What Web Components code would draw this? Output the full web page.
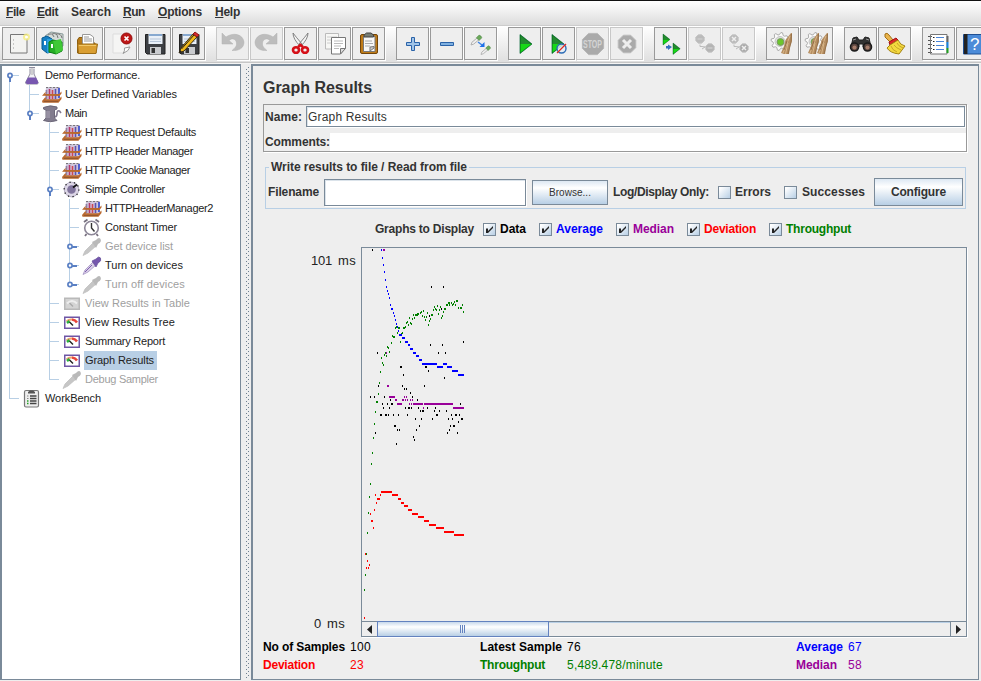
<!DOCTYPE html>
<html lang="en"><head><meta charset="utf-8"><title>JMeter - Graph Results</title>
<style>
html,body{margin:0;width:981px;height:681px;overflow:hidden;background:#eee}
body{font:12px "Liberation Sans",Arial,sans-serif;color:#333}
</style></head><body>
<jmeter-app></jmeter-app>

<template id="app">
<style>
:host{display:grid;grid-template-rows:26px 38px 617px;width:981px;height:681px;overflow:hidden;background:#eee}
.main{display:grid;grid-template-columns:243px 8px 730px;min-height:0}
</style>
<menu-bar></menu-bar><tool-bar></tool-bar>
<div class="main"><test-tree></test-tree><split-bar></split-bar><results-panel></results-panel></div>
</template>

<template id="split">
<style>:host{display:block;background:#eee;overflow:hidden}svg{display:block}</style>
<svg width="8" height="617"><defs><pattern id="p" width="4" height="4" patternUnits="userSpaceOnUse"><rect x="3" y="1" width="1" height="1" fill="#6f8090"/><rect x="1" y="3" width="1" height="1" fill="#6f8090"/></pattern></defs><rect x="2" y="2" width="5" height="613" fill="url(#p)"/></svg>
</template>

<template id="menu">
<style>
:host{display:flex;box-sizing:border-box;height:26px;border-top:1px solid #111;border-bottom:1px solid #ccc;background:linear-gradient(#fff,#dcdcdc);padding-left:6px;font-weight:bold;line-height:22px}
fit-text{margin-right:12px}fit-text.b{margin-right:13px}
</style>
<fit-text w="19"><u>F</u>ile</fit-text><fit-text w="21" class="b"><u>E</u>dit</fit-text><fit-text w="40">Search</fit-text><fit-text w="22" class="b"><u>R</u>un</fit-text><fit-text w="44" class="b"><u>O</u>ptions</fit-text><fit-text w="25"><u>H</u>elp</fit-text>
</template>

<template id="toolbar">
<style>
:host{display:flex;box-sizing:border-box;height:38px;gap:11px;padding:1px 0 0 2px;background:linear-gradient(#fff,#dedede);border-bottom:1px solid #f4f4f4;box-shadow:inset 0 -1px #c6c6c6;overflow:hidden}
div{display:flex;gap:1px;flex:none}
</style>
<div><tool-button icon="new"></tool-button><tool-button icon="books"></tool-button><tool-button icon="open"></tool-button><tool-button icon="close"></tool-button><tool-button icon="save"></tool-button><tool-button icon="saveas"></tool-button></div>
<div><tool-button icon="undo" off></tool-button><tool-button icon="redo" off></tool-button><tool-button icon="cut"></tool-button><tool-button icon="copy"></tool-button><tool-button icon="paste"></tool-button></div>
<div><tool-button icon="plus"></tool-button><tool-button icon="minus"></tool-button><tool-button icon="toggle"></tool-button></div>
<div><tool-button icon="start"></tool-button><tool-button icon="nopause"></tool-button><tool-button icon="stop" off></tool-button><tool-button icon="shutdown" off></tool-button></div>
<div><tool-button icon="rstart"></tool-button><tool-button icon="rstop" off></tool-button><tool-button icon="rshut" off></tool-button></div>
<div><tool-button icon="clear"></tool-button><tool-button icon="clearall"></tool-button></div>
<div><tool-button icon="search"></tool-button><tool-button icon="reset"></tool-button></div>
<div><tool-button icon="list"></tool-button><tool-button icon="help"></tool-button></div>
</template>

<template id="tree">
<style>
:host{display:block;box-sizing:border-box;background:#fff;border:1px solid #7a8a99;border-left-width:2px;border-top-width:2px;font-size:11px;height:616px;margin-right:2px}
</style>
<tree-node level="0" lines="9b" handle="open" icon="flask" w="95">Demo Performance.</tree-node>
<tree-node level="1" lines="9 29" icon="tubes" w="112">User Defined Variables</tree-node>
<tree-node level="1" lines="9 29t" handle="open" icon="spool" w="22">Main</tree-node>
<tree-node level="2" lines="9 49" icon="tubes" w="111">HTTP Request Defaults</tree-node>
<tree-node level="2" lines="9 49" icon="tubes" w="108">HTTP Header Manager</tree-node>
<tree-node level="2" lines="9 49" icon="tubes" w="105">HTTP Cookie Manager</tree-node>
<tree-node level="2" lines="9 49" handle="open" icon="dial" w="80">Simple Controller</tree-node>
<tree-node level="3" lines="9 49 69" icon="tubes" w="108">HTTPHeaderManager2</tree-node>
<tree-node level="3" lines="9 49 69" icon="clock" w="72">Constant Timer</tree-node>
<tree-node level="3" lines="9 49 69" handle="shut" icon="dropoff" off w="68">Get device list</tree-node>
<tree-node level="3" lines="9 49 69" handle="shut" icon="drop" w="78">Turn on devices</tree-node>
<tree-node level="3" lines="9 49 69t" handle="shut" icon="dropoff" off w="80">Turn off devices</tree-node>
<tree-node level="2" lines="9 49" icon="gaugeoff" off w="105">View Results in Table</tree-node>
<tree-node level="2" lines="9 49" icon="gauge" w="90">View Results Tree</tree-node>
<tree-node level="2" lines="9 49" icon="gauge" w="80">Summary Report</tree-node>
<tree-node level="2" lines="9 49" icon="gauge" selected w="69">Graph Results</tree-node>
<tree-node level="2" lines="9 49t" icon="dropoff" off w="73">Debug Sampler</tree-node>
<tree-node level="0" lines="9t" icon="bench" w="56">WorkBench</tree-node>
</template>

<template id="panel">
<style>
:host{display:block;box-sizing:border-box;width:728px;height:616px;border:1px solid #7a8a99;border-top-width:2px;border-left-width:2px;padding-left:10px;font-weight:bold;overflow:hidden}
h1{margin:13px 0 7px;font-size:16px;line-height:18px;height:18px}
.names{box-sizing:border-box;width:704px;height:48px;border:1px solid #999;box-shadow:1px 1px #fff;padding-left:1px;display:grid;grid-template-rows:24px 4px 18px;line-height:24px}
.r{display:flex}.r fit-text{flex:none}
.in{box-sizing:border-box;background:#fff;border:1px solid #7a8a99;box-shadow:inset 1px 1px #dbe3ea,1px 1px #fff;font-weight:normal}
.name{margin:1px 0 0 4px;width:659px;height:21px;padding-left:1px;line-height:20px}
.names .c{line-height:19px}.com{flex:1;background:#fff;height:18px}
.c{grid-row:3}
.file{box-sizing:border-box;margin:15px 0 0 2px;width:701px;height:42px;border:1px solid #b8cfe5;padding-left:2px;display:grid;grid-template-rows:10px 29px}
.legend{height:16px;margin:-9px 0 0 1px;line-height:16px}
.legend fit-text{background:#eee;padding:0 2px}
.frow{display:flex;align-items:center;height:28px}
.filebox{width:202px;height:27px;margin:0 6px 0 5px}
.graphs{display:flex;align-items:center;height:18px;margin:11px 0 9px 112px}
.plot{display:grid;grid-template-columns:98px 606px;height:390px;font-weight:normal;font-size:13px;color:#222}
.axis{display:flex;flex-direction:column;justify-content:space-between;padding:6px 0 6px;line-height:15px}
.axis div{display:flex;gap:6px}.axis div:first-child{padding-left:48px}.axis div:last-child{padding-left:51px}
.sum{display:grid;grid-template-columns:87px 130px 87px 229px 52px 60px;grid-auto-rows:18px;line-height:18px;padding-top:1px}
.n{font-weight:normal}
.k{color:#000}.bl{color:#00f}.rd{color:#f00}.gr{color:#008000}.pu{color:#909}
</style>
<h1><fit-text w="109">Graph Results</fit-text></h1>
<div class="names"><div class="r"><fit-text w="37">Name:</fit-text><div class="in name"><fit-text w="79">Graph Results</fit-text></div></div>
<div class="r c"><fit-text w="65">Comments:</fit-text><div class="com"></div></div></div>
<div class="file"><div class="legend"><fit-text w="196">Write results to file / Read from file</fit-text></div>
<div class="frow"><fit-text w="51">Filename</fit-text><div class="in filebox"></div><swing-button style="width:76px;height:25px;font-weight:normal;font-size:10px"><fit-text w="42">Browse...</fit-text></swing-button>
<fit-text w="96" style="margin:0 9px 0 5px">Log/Display Only:</fit-text><swing-check></swing-check><fit-text w="36" style="margin:0 13px 0 4px">Errors</fit-text><swing-check></swing-check><fit-text w="63" style="margin:0 9px 0 5px">Successes</fit-text><swing-button style="width:89px;height:28px"><fit-text w="55">Configure</fit-text></swing-button></div></div>
<div class="graphs"><fit-text w="99" style="margin-right:9px">Graphs to Display</fit-text>
<swing-check on></swing-check><fit-text class="k" w="26" style="margin:0 13px 0 4px">Data</fit-text>
<swing-check on></swing-check><fit-text class="bl" w="47" style="margin:0 13px 0 4px">Average</fit-text>
<swing-check on></swing-check><fit-text class="pu" w="41" style="margin:0 13px 0 4px">Median</fit-text>
<swing-check on></swing-check><fit-text class="rd" w="52" style="margin:0 13px 0 4px">Deviation</fit-text>
<swing-check on></swing-check><fit-text class="gr" w="65" style="margin-left:4px">Throughput</fit-text></div>
<div class="plot"><div class="axis"><div><fit-text w="21">101</fit-text><fit-text w="18">ms</fit-text></div><div><fit-text w="7">0</fit-text><fit-text w="18">ms</fit-text></div></div><results-graph></results-graph></div>
<div class="sum"><fit-text class="k" w="82">No of Samples</fit-text><fit-text class="n k" w="21">100</fit-text><fit-text class="k" w="82">Latest Sample</fit-text><fit-text class="n k" w="14">76</fit-text><fit-text class="bl" w="47">Average</fit-text><fit-text class="n bl" w="14">67</fit-text>
<fit-text class="rd" w="52">Deviation</fit-text><fit-text class="n rd" w="14">23</fit-text><fit-text class="gr" w="65">Throughput</fit-text><fit-text class="n gr" w="96">5,489.478/minute</fit-text><fit-text class="pu" w="41">Median</fit-text><fit-text class="n pu" w="14">58</fit-text></div>
</template>

<template id="graph">
<style>
:host{display:grid;grid-template-rows:373px 15px;box-sizing:border-box;width:606px;height:390px;border:1px solid #7a8a99;box-shadow:1px 1px #fff}
svg{display:block}
.bar{display:flex;box-sizing:border-box;height:15px;border-top:1px solid #7a8a99;background:#eee}
.b{width:15px;display:grid;place-items:center;flex:none}
.th{box-sizing:border-box;width:172px;height:16px;margin-top:-1px;border:1px solid #6382bf;background:linear-gradient(#c8d9ec,#fff 35%,#b8cfe5);display:grid;place-items:center}
.tr{flex:1;border-right:1px solid #7a8a99;box-shadow:inset 0 1px #b8cfe5}
</style>
<svg class="data" width="604" height="373" viewBox="362 248 604 373" shape-rendering="crispEdges"></svg>
<div class="bar"><div class="b"><svg width="5" height="9"><path d="M5 0V9L0 4.500z" fill="#222"/></svg></div><div class="th"><svg width="6" height="9" shape-rendering="crispEdges"><path d="M.5 0V8M2.500 0V8M4.500 0V8" stroke="#6382bf"/></svg></div><div class="tr"></div><div class="b"><svg width="5" height="9"><path d="M0 0V9L5 4.500z" fill="#222"/></svg></div></div>
</template>

<script>
const tpl=(host,id)=>host.attachShadow({mode:'open'}).append(document.getElementById(id).content.cloneNode(true));
const simple=(tag,id)=>customElements.define(tag,class extends HTMLElement{constructor(){super();tpl(this,id)}});

const page='<path d="M7.500 6.500H24V25H7.500z" fill="#f3f3f1" stroke="#777"/>';
const disk='<path d="M6.500 6.500H26V26H8L6.500 24.500z" fill="#3c3f43" stroke="#222"/><path d="M9.500 6H23.500V16H9.500z" fill="#e9f0f8"/><path d="M10 6H23V8H10z" fill="#87a9d0"/><path d="M11 11H22M11 13.500H22" stroke="#b6c5d8"/><path d="M11 19H22V26H11z" fill="#c9cbce"/><path d="M12.500 20H16V25H12.500z" fill="#333"/>';
const curl='<path fill="#bdbdbd" stroke="#b2b2b2" stroke-width=".5" d="M5 5V16H16L12 12.500C15 9.500 19 11 19.500 15C20 18 18 20 15 22.500C22 23 27 20 27 14C26 6 16 4 9 9z"/>';
const tri=(x,y,s)=>`<g transform="translate(${x} ${y}) scale(${s})"><path d="M0 0L12 9.500L0 19z" fill="#0a6b0a" stroke="#063" stroke-width=".7"/><path d="M.5 9.500H11.500L.5 18z" fill="#17d817"/><path d="M.5 1L11 9.500H.5z" fill="#238a30"/></g>`;
const broom=x=>`<path d="M${x+10} 5L${x+4.5} 12L${x+3} 18L${x} 25L${x+3} 26H${x+8}L${x+9} 19L${x+11} 13V5z" fill="#b58d60"/><path d="M${x+9} 8L${x+2} 25M${x+7} 15L${x+4.5} 26" stroke="#d9b78a"/><path d="M${x+10.5} 6L${x+10} 14L${x+7} 26M${x+6} 13L${x+3} 22" fill="none" stroke="#8b6843" stroke-width=".8"/>`;
let teeth='';for(let i=0;i<32;i++){const r=i%4<2?9:6.8,a=(i+.5)*Math.PI/16;teeth+=(13+r*Math.cos(a)).toFixed(1)+','+(13.5+r*Math.sin(a)).toFixed(1)+' '}
const gear=`<polygon points="${teeth}" fill="#fbfbfa" stroke="#a4a4a4" stroke-width=".9"/><circle cx="13" cy="13.500" r="5" fill="#ddd" stroke="#bbb" stroke-width=".8"/><circle cx="13.500" cy="14" r="3.400" fill="#6cc62c" stroke="#7a9a62"/>`;
const pip=(x,y,r)=>`<g transform="translate(${x} ${y}) scale(${r})"><path d="M0 10L1 7L7 2L9 4L3 9z" fill="#eee" stroke="#aaa"/><path d="M6 2L9 -1L11 0L12 2L9 5z" fill="#6ba95a" stroke="#498342" stroke-width=".6"/></g>`;
const oct=(f,s,x,y,r)=>{let p='';for(let i=0;i<8;i++){const a=(i+.5)*Math.PI/4;p+=(x+r*Math.cos(a))+','+(y+r*Math.sin(a))+' '}return `<polygon points="${p}" fill="${f}" stroke="${s}"/>`};
const hook='<path d="M11 15.500V18H13V16.500L17 19L13 22V20.500H11z" fill="#356fbd"/>';
const I={
new:page+'<path d="M10 12H11M10 16H11M10 20H11" stroke="#999"/><circle cx="23.500" cy="9" r="3.500" fill="#f6ee7d" opacity=".8"/><circle cx="23.500" cy="9" r="1.500" fill="#fff"/>',
books:'<path d="M8 8L14 4L26 6V18L20 20z" fill="#d5dbd8" stroke="#899"/><path d="M11 7Q15 4 17 9M15 6Q20 4 21 10M19 6Q24 5 25 10" fill="none" stroke="#777"/><path d="M5 10L10 8L15 11V24L10 25L5 21z" fill="#167fc4" stroke="#075a91"/><path d="M10 11V25L15 24V11z" fill="#2ba2df"/><path d="M12 14L16 12L25 14V23L19 26L12 24z" fill="#25ad25" stroke="#0b7c12"/><path d="M16 13L24 11L26 22L19 26z" fill="#40c936"/><path d="M8 13V17M15 16V20" stroke="#fff" stroke-width="2"/>',
open:'<path d="M6.500 12L8 9.500H12V15H24L25 25H6.500z" fill="#b67918" stroke="#8d5e10"/><path d="M11.500 17V6.500H19L22.500 9V17z" fill="#fff" stroke="#999"/><path d="M13 9H18M13 11H21M13 13H21" stroke="#999"/><path d="M6.500 16H26.500L25 25.500H7.500z" fill="#d99e32" stroke="#9c6c15"/><path d="M8 17.500H25" stroke="#f2c868"/>',
close:'<path d="M8 6H24V21L19 25H8z" fill="#f5f5f4" stroke="#ddd"/><path d="M18 25.500Q20 23 19.500 20L25 19Q24 23 18 25.500z" fill="#fff" stroke="#999"/><circle cx="21.500" cy="10.500" r="5.500" fill="#bd1717" stroke="#930c0c"/><path d="M19.500 8.500L23.500 12.500M23.500 8.500L19.500 12.500" stroke="#fff" stroke-width="1.700"/>',
save:disk,saveas:disk+'<path d="M6 25L8 20L20 6L24 9L11 23z" fill="#f1b81a" stroke="#3c2d10"/><path d="M8.500 21L21 7" stroke="#222"/><path d="M20 6L22 4L26 7L24 9z" fill="#d7292c" stroke="#8b1919"/><path d="M6 25L7 22L9 24z" fill="#222"/>',
undo:curl,redo:`<g transform="translate(31 0) scale(-1 1)">${curl}</g>`,
cut:'<path d="M8 5Q8 11 15 18L17 16Q11 9 8 5zM23 5Q23 11 16 18L14 16Q20 9 23 5z" fill="#f4f4f4" stroke="#777" stroke-width=".9"/><g fill="none" stroke="#d51018" stroke-width="2.600"><ellipse cx="11" cy="22" rx="3" ry="2.800"/><ellipse cx="20" cy="22" rx="3" ry="2.800"/><path d="M13 19L15.500 17L18 19"/></g>',
copy:'<path d="M6.500 5.500H19.500V21H6.500z" fill="#f7f7f5" stroke="#bbb"/><path d="M8 9H18M8 12H13M8 15H12" stroke="#ccc"/><path d="M12.500 9.500H26.500V20L21.500 26H12.500z" fill="#fff" stroke="#777"/><path d="M15 13H24M15 15.500H24M15 18H22M15 20.500H20" stroke="#bbb"/><path d="M21.500 26V20.500H26.500z" fill="#ddd" stroke="#777"/>',
paste:'<rect x="7.500" y="6.500" width="17" height="19" rx="1.500" fill="#bf7b17" stroke="#72450a"/><path d="M10.500 8.500H22V23.500H10.500z" fill="#f8f8f7" stroke="#777"/><path d="M11 9V7L13.500 5H18L20.500 7V9z" fill="#777d74" stroke="#444"/><path d="M12 13H19M12 15.500H20M12 18H17" stroke="#aaa"/><path d="M17 23V19L21 18.500V20z" fill="#ccc" stroke="#777"/>',
plus:'<path d="M14.500 9.500H17.500V14.500H22.500V17.500H17.500V22.500H14.500V17.500H9.500V14.500H14.500z" fill="#a0c4e8" stroke="#2a62a8"/>',
minus:'<path d="M9.500 14.500H22.500V17.500H9.500z" fill="#7fb0e0" stroke="#2a62a8"/>',
toggle:pip(6,8,.9)+pip(16,18.5,.8)+'<path d="M13 14L17 17" stroke="#3b82e6" stroke-width="1.500"/><path d="M19.500 14V19H14.500z" fill="#1c70e8"/>',
start:tri(11,6.5,1),nopause:tri(9,6.5,1)+'<circle cx="18.500" cy="20.500" r="4.500" fill="#e4edf5" fill-opacity=".8" stroke="#2c6bb5" stroke-width="1.400"/><path d="M14 25L23 16" stroke="#e12d22" stroke-width="1.300"/>',
stop:oct('#aaa','#b8b8b8',16,16,11.500)+'<g transform="translate(6 19.800) scale(.88 1.350)"><text font-family="Liberation Sans" font-size="8" font-weight="bold" fill="#d4d4d4">STOP</text></g>',
shutdown:oct('#aaa','#bbb',16,16,9.500)+'<path d="M12 12L20 20M20 12L12 20" stroke="#ededed" stroke-width="3"/>',
rstart:tri(8,6,.58)+tri(18,15,.6)+hook,
rstop:oct('#bbb','#c4c4c4',11,11,4.500)+oct('#b4b4b4','#c4c4c4',21,20,4.500)+'<path d="M8.500 11H13.500M18.500 20H23.500" stroke="#ccc" stroke-width="1.500"/><path d="M11 16.500V18.500H13L16 19L13 21" fill="none" stroke="#bbb"/>',
rshut:oct('#bbb','#c4c4c4',11,11,4.500)+oct('#aaa','#c4c4c4',21,20,4.500)+'<path d="M9 9L13 13M13 9L9 13M19 18L23 22M23 18L19 22" stroke="#eee" stroke-width="1.500"/><path d="M11 16.500V18.500H13L16 19L13 21" fill="none" stroke="#bbb"/>',
clear:gear+broom(14),clearall:gear+broom(7)+broom(16),
search:'<path d="M8 10L12 9L14 12H18L20 9L24 10L26 19H18V16H14V19H6z" fill="#333" stroke="#222"/><circle cx="9.500" cy="19" r="4" fill="#5a453f" stroke="#1b1b1b" stroke-width="1.600"/><circle cx="22.500" cy="19" r="4" fill="#5a453f" stroke="#1b1b1b" stroke-width="1.600"/><circle cx="9.500" cy="19.500" r="2" fill="#a47c6a"/><circle cx="22.500" cy="19.500" r="2" fill="#a47c6a"/><path d="M8 12L11 11M21 11L24 12" stroke="#999"/>',
reset:'<path d="M6 6Q8 4 10 7L14 12L11 14L6 9z" fill="#e9b44c" stroke="#a47019"/><path d="M10 14L17 10L19 12L11 17z" fill="#db2828" stroke="#a21212"/><path d="M11 17L19 12Q21 17 26 18L20 26Q11 25 8 20z" fill="#f3d93f" stroke="#a58312"/><path d="M12 18Q13 22 18 24M15 17Q17 20 22 22M18 15Q19 18 24 20" fill="none" stroke="#c8a726"/>',
list:'<path d="M7.500 6.500H24V26H7.500z" fill="#fff" stroke="#777"/><path d="M24.500 8V14" stroke="#666" stroke-width="2"/><path d="M24.500 14V20" stroke="#1684e2" stroke-width="2"/><path d="M24.500 20V25" stroke="#20a020" stroke-width="2"/><path d="M5 8.500H9M5 12.500H9M5 16.500H9M5 20.500H9M5 24.500H9" stroke="#555" stroke-dasharray="2 1"/><path d="M13 9.500H21M13 13.500H21M13 17.500H21M13 21.500H21" stroke="#4a85d8"/><path d="M10 9.500H11.500M10 13.500H11.500M10 17.500H11.500M10 21.500H11.500" stroke="#222"/>',
help:'<path d="M6.500 6.500H26V26H6.500z" fill="#4b8bd8" stroke="#1f4f92"/><path d="M7 6V26H10.500V6z" fill="#222"/><text x="13" y="22" font-family="Liberation Sans" font-size="17" fill="#fff">?</text>',
flask:'<path d="M7 1.500H13M8 2.500V8L3.500 16.500Q3.500 18 5 18H15Q16.500 18 16 16.500L12 8V2.500" fill="#f2f2f6" stroke="#8d8a9b"/><path d="M6 11.500H14L16.500 16.500L15 18H5L3.500 16.500z" fill="#7857b0"/><path d="M10 2V9" stroke="#aaa"/>',
tubes:'<path d="M4 2H18L17.500 15H3z" fill="#cfc6dc"/><g stroke-width="1.600"><path d="M4.500 5V14" stroke="#8f80a4"/><path d="M7.500 4V14" stroke="#b8366c"/><path d="M10.500 5V14" stroke="#cc4658"/><path d="M13.500 4V14" stroke="#5c55ae"/><path d="M17 3V13" stroke="#2f45cc"/></g><path d="M4 2.500H6M7.500 2.500H9.500M11 2.500H13M14.500 2.500H16.500" stroke="#777"/><path d="M0 10.800L3 7.500H4.500L3 9H17L19.500 6.500V8.500L17.500 11z" fill="#b9692f"/><path d="M0 16L3 12.500H4.500L3.500 14.300H16.500L19.500 11.500V14L16.500 17.700H.5z" fill="#b9692f"/><path d="M2 16.500H16" stroke="#8b532e" stroke-width=".8"/>',
spool:'<path d="M1.500 3.500Q8 .5 15 3V5L12.500 6V14L15 16.500Q8 19 1.500 16.500L4 14V6L1.500 5z" fill="#817b8d" stroke="#6d6879"/><path d="M5 7V14M7 7V14" stroke="#aca6b7"/><path d="M13 13C17 12 13 6 17.500 7L19 9" fill="none" stroke="#837b91" stroke-width="1.600"/>',
dial:'<circle cx="9.500" cy="9.500" r="7.300" fill="#dcd6e6" stroke="#b5aec4"/><circle cx="9.500" cy="9.500" r="7.300" fill="none" stroke="#222" stroke-width="1.300" stroke-dasharray="1.200 3.386"/><circle cx="9.500" cy="9.500" r="4.300" fill="#81759d"/><path d="M11 7.500L15 4.500" stroke="#111" stroke-width="1.800"/>',
clock:'<circle cx="9.500" cy="10" r="6.800" fill="#fff" stroke="#8d8798" stroke-width="1.600"/><path d="M2 4L5.500 1.500M13.500 1.500L17 4M4.500 16L3 18M14.500 16L16 18" stroke="#77707f" stroke-width="1.800"/><path d="M9.500 5V10L12.500 13.500" fill="none" stroke="#333" stroke-width="1.400"/>',
drop:'<path d="M1 18.500L3 14L11 6L14 9L6 16z" fill="#d9d0e6" stroke="#a493c4" stroke-width=".8"/><path d="M3 16L10 9" stroke="#7d5db0"/><path d="M10 5L14 3Q17-.5 18.500 2Q20 5 16 7L14 11z" fill="#7557ad" stroke="#65509a" stroke-width=".7"/>',
dropoff:'<path d="M1 18.500L3 14L11 6L14 9L6 16z" fill="#c6c6c6" stroke="#c0c0c0" stroke-width=".8"/><path d="M10 5L14 3Q17-.5 18.500 2Q20 5 16 7L14 11z" fill="#b9b9b9"/>',
gauge:'<rect x="2.750" y="4.250" width="14.500" height="11" fill="#fff" stroke="#6f56a5" stroke-width="1.500"/><path d="M4.500 8.500Q7 6 10 6.500" fill="none" stroke="#f0a070" stroke-width="2"/><path d="M10 6.500Q13.500 7 15 9.500" fill="none" stroke="#e8453a" stroke-width="2.500"/><path d="M5 10L7.500 8" stroke="#28b23d" stroke-width="2.500"/><path d="M7.500 9L11 12.500" stroke="#222" stroke-width="1.400"/>',
gaugeoff:'<rect x="2.750" y="4.250" width="14.500" height="11" fill="#d4d4d4" stroke="#b9b9b9" stroke-width="1.500"/><path d="M5 9.500Q10 4.500 15 9.500" fill="none" stroke="#eee" stroke-width="2"/><path d="M7.500 9L11 12.500" stroke="#aaa" stroke-width="1.400"/>',
bench:'<rect x="2.500" y="1.500" width="14" height="16.500" rx="1.500" fill="#eee" stroke="#777" stroke-width="1.200"/><path d="M6 3L8 1.500H11L13 3V4.500H6z" fill="#555"/><path d="M8 7H14.500M8 9.500H14.500M8 12H14.500M8 14.500H14.500" stroke="#444" stroke-width="1.300"/><path d="M5 7H6.500M5 9.500H6.500" stroke="#888"/><path d="M5 12H6.500M5 14.500H6.500" stroke="#26a126" stroke-width="1.500"/>'
};

customElements.define('tool-button',class extends HTMLElement{constructor(){super();
 const off=this.hasAttribute('off');
 this.attachShadow({mode:'open'}).innerHTML=`<style>:host{display:block;box-sizing:border-box;width:33px;height:33px;border:1px solid ${off?'#c8c8c8':'#999'};background:#eee;box-shadow:1px 1px #fff}svg{display:block}</style><svg width="31" height="31" viewBox="0 0 31 31">${I[this.getAttribute('icon')]}</svg>`}});

customElements.define('tree-node',class extends HTMLElement{constructor(){super();
 const L=+this.getAttribute('level'),x=9+L*20,h=this.getAttribute('handle');let g='';
 for(const s of this.getAttribute('lines').split(' ')){const v=parseInt(s);g+=`<path d="M${v+.5} ${s.endsWith('b')?9:0}V${s.endsWith('t')?10:19}" stroke="#b8cfe5"/>`}
 g+=`<path d="M${x} 9.500H${x+10}" stroke="#b8cfe5"/>`;
 if(h)g+=(h=='open'?`<path d="M${x+1} 11V16" stroke="#5b80c4" stroke-width="2"/>`:`<path d="M${x+3} 10H${x+8}" stroke="#5b80c4" stroke-width="2"/>`)+`<circle cx="${x+1}" cy="9.500" r="2.100" fill="#fff" stroke="#5b80c4" stroke-width="1.700"/>`;
 const sel=this.hasAttribute('selected');
 this.attachShadow({mode:'open'}).innerHTML=`<style>:host{display:flex;height:19px;margin-left:-2px;line-height:19px;color:${this.hasAttribute('off')?'#a0a0a0':'#222'}}svg{display:block;flex:none;overflow:visible}b{font-weight:normal;margin-left:2px;padding:0 3px 0 1px;height:19px;${sel?'background:#b8cfe5':''}}</style><svg width="${22+20*L}" height="19">${g}</svg><svg width="20" height="19" viewBox="0 0 20 19">${I[this.getAttribute('icon')]}</svg><b><fit-text w="${this.getAttribute('w')}"><slot></slot></fit-text></b>`}});

customElements.define('swing-check',class extends HTMLElement{constructor(){super();
 this.attachShadow({mode:'open'}).innerHTML=`<style>:host{display:block;box-sizing:border-box;width:13px;height:13px;border:1px solid #7a8a99;background:linear-gradient(135deg,#fff 10%,#b8cfe5);flex:none;margin-top:1px}svg{display:block}</style><svg width="11" height="11">${this.hasAttribute('on')?'<path d="M2 4.500H4V7L9 2V4L4 9H2z" fill="#222"/>':''}</svg>`}});

customElements.define('swing-button',class extends HTMLElement{constructor(){super();
 this.attachShadow({mode:'open'}).innerHTML='<style>:host{display:flex;align-items:center;justify-content:center;box-sizing:border-box;border:1px solid #7a8a99;background:linear-gradient(#dde8f3,#fff 30%,#b8cfe5);flex:none}</style><slot></slot>'}});

simple('split-bar','split');simple('menu-bar','menu');simple('tool-bar','toolbar');simple('test-tree','tree');

/* Samples are x,y[,width] triples on a third-of-a-pixel grid; marks are two pixels tall. */
const series=[
['#000',355,242,'52,25 229,134 265,134 67,332 325,299 226,308 262,308 250,332 271,332 138,374,2 212,374,2 223,222 259,200'],
['#008000',355,242,'79,347 82,362 85,368 88,338 91,332 94,341 97,314 100,317 103,329 109,302 112,281 116,284,2 121,258 125,256 127,272 131,257,2 136,299 139,275 142,272 148,257,2 151,254 154,242 157,239 160,248 163,227 166,242 169,245 172,230 175,218 178,227 181,218 185,218,2 190,217,2 196,212 199,210 202,222 205,206 208,224 211,233 214,225 217,212 220,248 223,236 226,230 230,218,2 235,204 238,194 241,200 244,203 247,191 250,215 253,204 256,195 259,227 262,221 265,209 269,200,2 275,188,2 281,182,2 284,188 290,184 293,188 296,185 299,179 302,188 306,176,2 311,197 317,197,2 322,188 325,209'],
['#00f',355,242,'79,25 82,47 85,69 88,90 91,114 94,134 97,147 100,156 103,168 106,189 111,200,2 115,213 118,222 121,234 124,246 127,254 130,266 136,279,3 145,287,3 154,299,3 162,308,2 169,320,3 178,332,3 188,341,3 197,353,3 223.500,365,15 255,374,6 270,365,4 283.500,374,5 300,386,6 318,399,6'],
['#909',355,242,'87,25,2 94,332'],
['#008000',355,370,'76,5 73,39 70,71 66,96,2 61,126 58,161 55,203 52,248 49,281 46,341 43,380'],
['#000',355,370,'220,3 145,15 268,24 70,47 142,47 208,47 148,56 154,56 166,68 46,80 58,80 88,80 172,80 106,90 187,90 82,101 97,101 111,101,2 316,101 85,113 103,113 151,113 162,113,2 169,113 190,113 217,113 241,113 196,122 204,122,2 238,122 253,122 274,122 78,134,2 93,134,2 100,134 115,134 130,134 157,134 246,134,2 289,134 303,134,2 313,134 181,147 199,147 232,147 280,147 292,147 321,147,2 310,155 120,167,2 193,167 286,167 297,167,2 127,180 133,180 184,180 283,180 61,188 277,188 307,188 175,200 178,210 124,221'],
['#909',355,370,'99,47,2 111,80,6 148,80 154,80 123,90,2 144,90,2 152,90 158,90 166,90 172,90 133.500,101,5 163,101 169,101 189,101,10 250.500,101,29 310.500,113,11 205,113'],
['#f00',250,485,'343,400 350,249 355,249 358,240 352,228 347,207 362,87 366,108,2 370,129 373,75 376,30 379,54 385.500,42,3 391,30 409.500,21,11 435,30,6 448.500,42,3 457.500,54,3 468,63,4 480,75,4 495,87,6 513,96,6 529.500,108,5 547.500,120,7 570,129,8 597,141,10 627,150,10'],
['#008000',250,485,'355,84 352,144 349,207 346,269 343,315']];
customElements.define('results-graph',class extends HTMLElement{constructor(){super();tpl(this,'graph');
 let s='';for(const[c,ox,oy,d]of series)for(const p of d.split(' ')){const[x,y,w=1]=p.split(',').map(Number);
 s+=`<rect x="${ox+Math.round((x-w*1.5)/3)}" y="${oy+Math.round((y-3)/3)}" width="${w}" height="2" fill="${c}"/>`}
 this.shadowRoot.querySelector('.data').innerHTML=s}});

simple('results-panel','panel');simple('jmeter-app','app');

/* One-line label that spreads its letters to fill the width w. */
customElements.define('fit-text',class extends HTMLElement{constructor(){super();
 this.attachShadow({mode:'open'}).innerHTML='<style>:host{display:inline-block;white-space:nowrap;vertical-align:top}span{display:inline-block}</style><span><slot></slot></span>'}
 connectedCallback(){const sp=this.shadowRoot.querySelector('span'),sl=this.querySelector('slot');
 const t=sl?sl.assignedNodes({flatten:true}).map(n=>n.textContent).join(''):this.textContent;
 const w=+this.getAttribute('w'),n=sp.getBoundingClientRect().width;sp.style.letterSpacing=(w-n)/t.length+'px'}});
</script></body></html>
